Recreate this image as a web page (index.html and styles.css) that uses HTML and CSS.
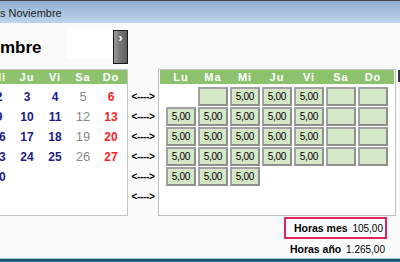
FILE: index.html
```html
<!DOCTYPE html>
<html lang="es">
<head>
    <meta charset="UTF-8">
    <title>Horas Noviembre</title>
    <link rel="stylesheet" href="styles.css">
</head>
<body>
    <div class="titlebar">s Noviembre</div>

    <div class="top">
        <h1 class="month">mbre</h1>
        <div class="month-box"></div>
        <div class="next-button">&rsaquo;</div>
    </div>

    <div class="main">
        <!-- calendar of the month -->
        <div class="calendar">
            <div class="cal-head">
                <div class="cal-grid">
                    <span>Mi</span><span>Ju</span><span>Vi</span><span>Sa</span><span>Do</span>
                </div>
            </div>
            <div class="cal-grid cal-days">
                <span>2</span><span>3</span><span>4</span><span class="sat">5</span><span class="sun">6</span>
                <span>9</span><span>10</span><span>11</span><span class="sat">12</span><span class="sun">13</span>
                <span>16</span><span>17</span><span>18</span><span class="sat">19</span><span class="sun">20</span>
                <span>23</span><span>24</span><span>25</span><span class="sat">26</span><span class="sun">27</span>
                <span>30</span>
            </div>
        </div>

        <div class="arrows">
            <span>&lt;----&gt;</span>
            <span>&lt;----&gt;</span>
            <span>&lt;----&gt;</span>
            <span>&lt;----&gt;</span>
            <span>&lt;----&gt;</span>
            <span>&lt;----&gt;</span>
        </div>

        <!-- hours per day -->
        <div class="hours">
            <div class="hours-head">
                <span>Lu</span><span>Ma</span><span>Mi</span><span>Ju</span><span>Vi</span><span>Sa</span><span>Do</span>
            </div>
            <div class="hours-grid">
                <span class="blank"></span><span class="cell"></span><span class="cell">5,00</span><span class="cell">5,00</span><span class="cell">5,00</span><span class="cell"></span><span class="cell"></span>
                <span class="cell">5,00</span><span class="cell">5,00</span><span class="cell">5,00</span><span class="cell">5,00</span><span class="cell">5,00</span><span class="cell"></span><span class="cell"></span>
                <span class="cell">5,00</span><span class="cell">5,00</span><span class="cell">5,00</span><span class="cell">5,00</span><span class="cell">5,00</span><span class="cell"></span><span class="cell"></span>
                <span class="cell">5,00</span><span class="cell">5,00</span><span class="cell">5,00</span><span class="cell">5,00</span><span class="cell">5,00</span><span class="cell"></span><span class="cell"></span>
                <span class="cell">5,00</span><span class="cell">5,00</span><span class="cell">5,00</span>
            </div>
        </div>

        <div class="edge"></div>
    </div>

    <div class="totals">
        <div class="total total-month"><b>Horas mes</b> 105,00</div>
        <div class="total"><b>Horas año</b> 1.265,00</div>
    </div>

    <div class="taskbar"></div>
</body>
</html>
```

FILE: styles.css
```css
body {
    margin: 0;
    width: 400px;
    height: 262px;
    overflow: hidden;
    background-color: #fafafa;
    font-family: "Liberation Sans", Arial, sans-serif;
    color: #000;
    display: flex;
    flex-direction: column;
}

.titlebar {
    height: 22px;
    border-top: 1px solid #454545;
    background: linear-gradient(to bottom, #93b0d1, #bcd4ec);
    font-size: 11px;
    line-height: 24px;
    color: #1e1e1e;
    white-space: nowrap;
}

.top {
    height: 46px;
    display: flex;
    align-items: flex-start;
}

.month {
    margin: 15px 0 0 0;
    width: 67px;
    font-size: 17px;
    line-height: 20px;
    font-weight: bold;
}

.month-box {
    margin-top: 6px;
    width: 46px;
    height: 29px;
    background-color: #fff;
}

.next-button {
    margin-top: 7px;
    width: 13px;
    height: 32px;
    border: 1px solid #1a1a1a;
    background: linear-gradient(to right, #9a9a9a, #7a7a7a 40%, #5e5e5e);
    color: #fff;
    font-size: 12px;
    font-weight: bold;
    line-height: 14px;
    text-align: center;
}

.main {
    display: flex;
    align-items: flex-start;
}

/* left calendar */
.calendar {
    width: 127px;
    height: 145px;
    background-color: #fff;
    border-top: 1px solid #c4c4c4;
    border-right: 1px solid #c4c4c4;
    border-bottom: 1px solid #c4c4c4;
    overflow: hidden;
}

.cal-head {
    height: 14px;
    background-color: #8cc26e;
    margin-bottom: 3px;
}

.cal-grid {
    display: grid;
    grid-template-columns: repeat(5, 28px);
    margin-left: -15px;
}

.cal-head span {
    color: #fff;
    font-size: 11px;
    font-weight: bold;
    letter-spacing: 1px;
    line-height: 15px;
    text-align: center;
}

.cal-days span {
    height: 20px;
    line-height: 20px;
    text-align: center;
    font-size: 12px;
    font-weight: bold;
    color: #1b1b8a;
}

.cal-days .sat {
    color: #8a8a8a;
    font-weight: normal;
    font-size: 13px;
}

.cal-days .sun {
    color: #ff1c1c;
}

/* arrows between the two panels */
.arrows {
    width: 30px;
    padding-top: 18px;
    display: flex;
    flex-direction: column;
}

.arrows span {
    height: 20px;
    line-height: 20px;
    text-align: center;
    font-size: 10px;
    font-weight: bold;
    letter-spacing: -0.3px;
}

/* hours grid */
.hours {
    width: 234px;
    height: 145px;
    padding: 0 1px;
    background-color: #fff;
    border: 1px solid #c0c0c0;
}

.hours-head {
    height: 14px;
    padding: 0 5px;
    background-color: #8cc26e;
    display: grid;
    grid-template-columns: repeat(7, 32px);
    margin-bottom: 3px;
}

.hours-head span {
    color: #fff;
    font-size: 11px;
    font-weight: bold;
    letter-spacing: 1px;
    line-height: 15px;
    text-align: center;
}

.hours-grid {
    padding: 0 5px;
    display: grid;
    grid-template-columns: repeat(7, 32px);
    grid-auto-rows: 20px;
}

.cell {
    margin: 0 1px;
    height: 15px;
    background-color: #d4e8c8;
    border: 2px solid #8e8e8e;
    border-top-color: #a2a2a2;
    border-left-color: #a2a2a2;
    font-size: 10px;
    line-height: 16px;
    text-align: center;
    letter-spacing: -0.3px;
}

.edge {
    margin: 1px 0 0 2px;
    width: 2px;
    height: 12px;
    background-color: #3a3a3a;
}

/* totals */
.totals {
    margin-top: 1px;
    padding-right: 13px;
    display: flex;
    flex-direction: column;
    align-items: flex-end;
    font-size: 10px;
}

.total {
    padding: 0 2px 0 8px;
    line-height: 14px;
}

.total b {
    font-size: 10.5px;
    margin-right: 2px;
}

.total-month {
    height: 18px;
    line-height: 19px;
    border: 2px solid #e0245c;
    margin-bottom: 3px;
}

.taskbar {
    margin-top: auto;
    height: 3px;
    border-top: 1px solid #9cd6f0;
    background: linear-gradient(to bottom, #1c3340, #2f7fae);
}
```
